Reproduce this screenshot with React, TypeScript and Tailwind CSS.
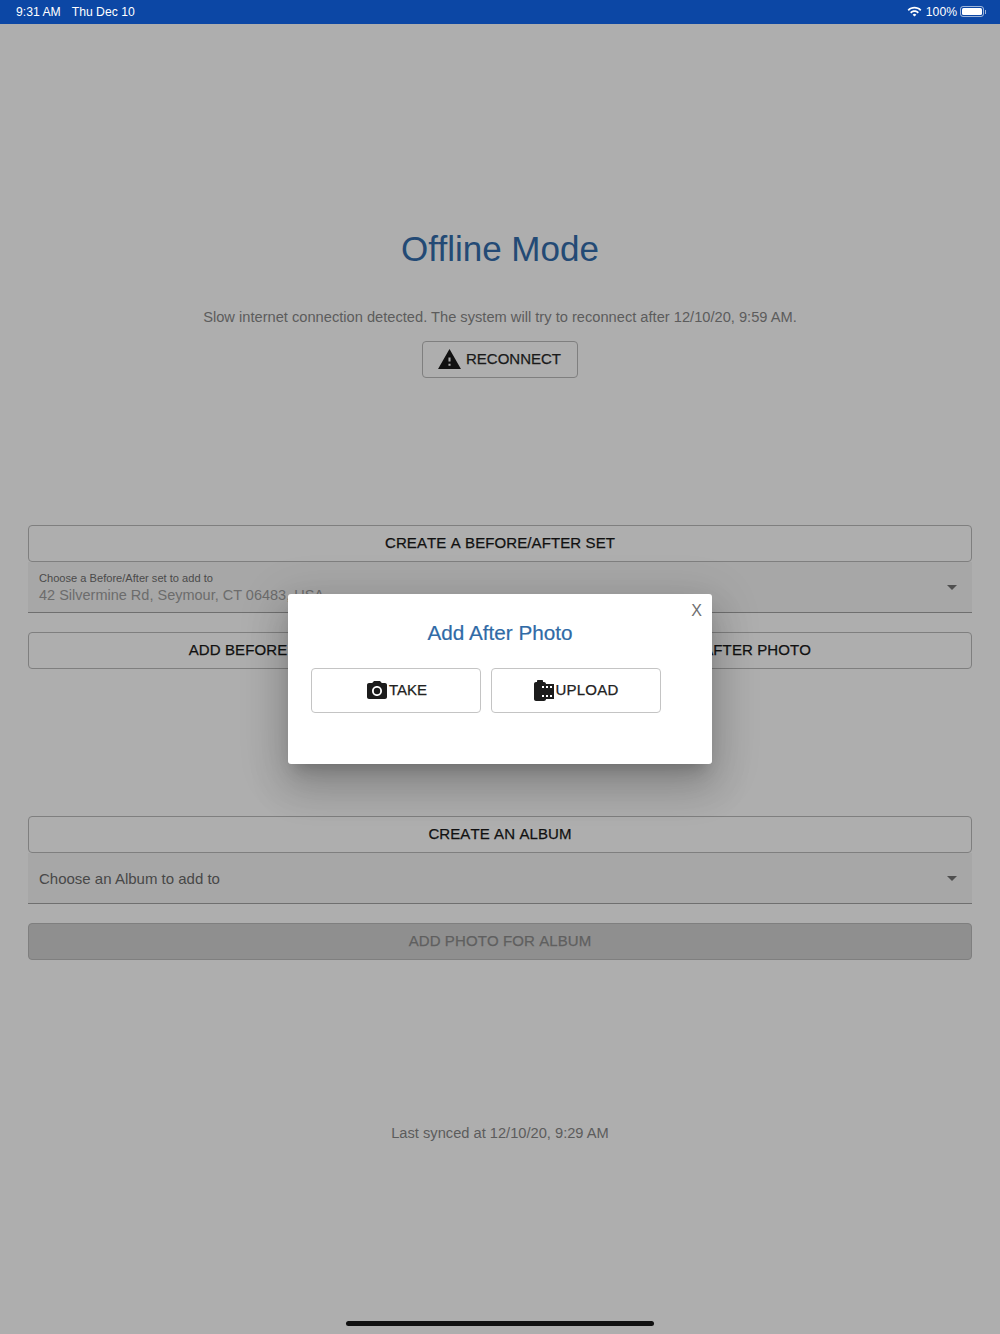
import { MdArrowDropDown, MdCameraRoll, MdPhotoCamera, MdWarning, MdWifi } from "react-icons/md";

const OutlineButton = ({ label, className = "" }: { label: string; className?: string }) => (
  <button className={`h-[37px] w-full rounded border border-[#7f7f7f] text-[15px] tracking-[0.1px] text-[#111] [font-kerning:none] [-webkit-text-stroke:0.25px] ${className}`}>
    {label}
  </button>
);

const SelectBox = ({ label, value }: { label?: string; value: string }) => (
  <div className="relative flex h-[51px] w-full flex-col justify-center border-b border-[#6f6f6f] bg-[#a7a7a7] px-[11px] pt-[2px]">
    {label && <span className="text-[11.1px] leading-[14px] text-[#4a4a4a]">{label}</span>}
    <span className={label ? "text-[14.5px] leading-[20px] text-[#6c6c6c]" : "text-[15px] leading-[20px] text-[#484848]"}>
      {value}
    </span>
    <MdArrowDropDown className="absolute right-[8px] top-[13px] text-[24px] text-[#4f4f4f]" />
  </div>
);

const App = () => {
  return (
    <div className="relative flex h-[1334px] w-[1000px] flex-col overflow-hidden bg-[#aeaeae] font-['Liberation_Sans',Arial,sans-serif]">
      <div className="flex h-[24px] items-center justify-between bg-[#0c47a5] pl-[16px] pr-[14px] text-[12.2px] text-white">
        <div className="flex gap-[11px]">
          <span>9:31 AM</span>
          <span>Thu Dec 10</span>
        </div>
        <div className="flex items-center">
          <MdWifi className="mr-[4px] text-[15px]" />
          <span className="mr-[3px]">100%</span>
          <div className="flex items-center">
            <div className="h-[11px] w-[24px] rounded-[3px] border border-white/60 p-[1px]">
              <div className="h-full w-full rounded-[1.5px] bg-white" />
            </div>
            <div className="ml-[1px] h-[4px] w-[1px] bg-white/60" />
          </div>
        </div>
      </div>

      <div className="flex flex-col items-center">
        <h1 className="mt-[204px] text-[35px] leading-[42px] text-[#234a75]">Offline Mode</h1>
        <p className="mt-[37px] text-[14.67px] leading-[20px] text-[#5c5c5c]">
          Slow internet connection detected. The system will try to reconnect after 12/10/20, 9:59 AM.
        </p>
        <button className="mt-[14px] flex h-[37px] w-[156px] items-center justify-center gap-[4px] rounded border border-[#7f7f7f] pr-[2px] text-[15px] text-[#1a1a1a] [-webkit-text-stroke:0.25px]">
          <MdWarning className="text-[25px] text-[#111]" />
          RECONNECT
        </button>
      </div>

      <div className="mt-[147px] flex flex-col px-[28px]">
        <OutlineButton label="CREATE A BEFORE/AFTER SET" />
        <SelectBox label="Choose a Before/After set to add to" value="42 Silvermine Rd, Seymour, CT 06483, USA" />
        <div className="mt-[19px] flex gap-[20px]">
          <OutlineButton label="ADD BEFORE PHOTO" className="pl-[14px]" />
          <OutlineButton label="ADD AFTER PHOTO" className="pr-[6px]" />
        </div>

        <div className="mt-[147px]">
          <OutlineButton label="CREATE AN ALBUM" />
        </div>
        <SelectBox value="Choose an Album to add to" />
        <button className="mt-[19px] h-[37px] w-full rounded border border-[#7f7f7f] bg-[#8f8f8f] text-[15px] tracking-[0.1px] text-[#5f5f5f] [font-kerning:none] [-webkit-text-stroke:0.25px]">
          ADD PHOTO FOR ALBUM
        </button>
      </div>

      <p className="mt-[163px] text-center text-[14.67px] leading-[20px] text-[#5c5c5c]">Last synced at 12/10/20, 9:29 AM</p>

      <div className="absolute bottom-[8px] left-[346px] h-[5px] w-[308px] rounded-full bg-[#111]" />

      <div className="absolute left-[288px] top-[594px] h-[170px] w-[424px] rounded-[3px] bg-white px-[23px] shadow-[0_11px_15px_-7px_rgba(0,0,0,0.2),0_24px_38px_3px_rgba(0,0,0,0.14),0_9px_46px_8px_rgba(0,0,0,0.12)]">
        <span className="absolute right-[10px] top-[8px] text-[16px] leading-[18px] text-[#6f6f6f]">X</span>
        <h2 className="mt-[27px] text-center text-[20.7px] leading-[24px] text-[#2f6aa6] [-webkit-text-stroke:0.2px]">Add After Photo</h2>
        <div className="mt-[23px] flex gap-[10px]">
          <button className="flex h-[45px] w-[170px] items-center justify-center rounded border border-[#c4c4c4] text-[15px] text-[#222] [-webkit-text-stroke:0.25px]">
            <MdPhotoCamera className="text-[24px] text-[#1c1c1c]" />
            TAKE
          </button>
          <button className="flex h-[45px] w-[170px] items-center justify-center rounded border border-[#c4c4c4] pr-[2px] text-[15px] tracking-[0.2px] text-[#222] [-webkit-text-stroke:0.25px]">
            <MdCameraRoll className="text-[24px] text-[#1c1c1c]" />
            UPLOAD
          </button>
        </div>
      </div>
    </div>
  );
};

export default App;
